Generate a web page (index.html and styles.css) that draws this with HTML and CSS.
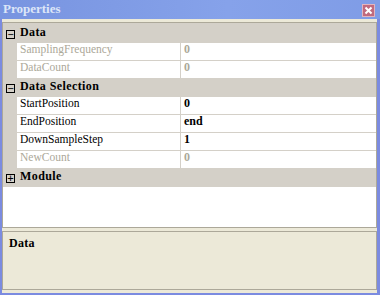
FILE: index.html
```html
<!DOCTYPE html>
<html lang="en">
<head>
    <meta charset="UTF-8">
    <title>Properties</title>
    <link rel="stylesheet" href="styles.css">
</head>
<body>
    <div class="window">
        <div class="titlebar">
            <span class="title">Properties</span>
            <span class="close">
                <svg width="13" height="13" viewBox="0 0 13 13">
                    <rect x="0.5" y="0.5" width="12" height="12" fill="#c06a7e" stroke="#e2b4be"/>
                    <path d="M3.5 3.5 L9.5 9.5 M9.5 3.5 L3.5 9.5" stroke="#fff" stroke-width="2"/>
                </svg>
            </span>
        </div>
        <div class="client">
            <div class="grid">
                <div class="cat first">
                    <span class="toggle">&minus;</span>
                    <span class="cat-name">Data</span>
                </div>
                <div class="prop disabled">
                    <span class="gutter"></span>
                    <span class="name">SamplingFrequency</span>
                    <span class="value">0</span>
                </div>
                <div class="prop disabled">
                    <span class="gutter"></span>
                    <span class="name">DataCount</span>
                    <span class="value">0</span>
                </div>
                <div class="cat">
                    <span class="toggle">&minus;</span>
                    <span class="cat-name">Data Selection</span>
                </div>
                <div class="prop">
                    <span class="gutter"></span>
                    <span class="name">StartPosition</span>
                    <span class="value">0</span>
                </div>
                <div class="prop">
                    <span class="gutter"></span>
                    <span class="name">EndPosition</span>
                    <span class="value">end</span>
                </div>
                <div class="prop">
                    <span class="gutter"></span>
                    <span class="name">DownSampleStep</span>
                    <span class="value">1</span>
                </div>
                <div class="prop disabled">
                    <span class="gutter"></span>
                    <span class="name">NewCount</span>
                    <span class="value">0</span>
                </div>
                <div class="cat">
                    <span class="toggle">+</span>
                    <span class="cat-name">Module</span>
                </div>
            </div>
            <div class="desc">
                <span class="desc-title">Data</span>
            </div>
        </div>
    </div>
</body>
</html>
```

FILE: styles.css
```css
body {
    margin: 0;
    font-family: "Liberation Serif", serif;
}
.window {
    width: 380px;
    height: 295px;
    background-color: #7b8be0;
    display: flex;
    flex-direction: column;
}
.titlebar {
    height: 19px;
    flex: none;
    display: flex;
    align-items: center;
    justify-content: space-between;
    padding: 0 5px 0 3px;
    background: linear-gradient(to right, #7894e0, #86a2ea 60%, #7f9ce6);
}
.title {
    color: #dde6f8;
    font-weight: bold;
    font-size: 13px;
    margin-top: -1px;
}
.close {
    display: flex;
    margin-top: 1px;
}
.client {
    flex: 1;
    margin: 0 3px 2px 2px;
    background-color: #ece9d8;
    padding: 3px 0;
    display: flex;
    flex-direction: column;
    gap: 3px;
}
.grid {
    height: 204px;
    border: 1px solid #aca899;
    background-color: #fff;
    flex: none;
}
.cat {
    height: 18px;
    background-color: #d4d0c8;
    display: flex;
    align-items: center;
    font-weight: bold;
    font-size: 12px;
    letter-spacing: 0.4px;
}
.cat.first {
    height: 20px;
    padding-top: 2px;
    box-sizing: border-box;
}
.toggle {
    width: 7px;
    height: 7px;
    border: 1px solid #000;
    background-color: #d4d0c8;
    margin: 0 5px 0 3px;
    font-size: 10px;
    line-height: 7px;
    text-align: center;
    letter-spacing: 0;
    font-family: "DejaVu Sans Mono", monospace;
    font-weight: normal;
}
.cat-name {
    margin-top: -3px;
}
.prop {
    height: 18px;
    display: flex;
    font-size: 11.5px;
}
.gutter {
    width: 14px;
    background-color: #d4d0c8;
    flex: none;
}
.name {
    width: 160px;
    flex: none;
    padding-left: 3px;
    border-right: 1px solid #d4d0c8;
    border-bottom: 1px solid #d4d0c8;
    line-height: 13px;
}
.value {
    flex: 1;
    padding-left: 3px;
    border-bottom: 1px solid #d4d0c8;
    font-weight: bold;
    font-size: 12px;
    line-height: 13px;
}
.disabled {
    color: #aca899;
}
.desc {
    flex: 1;
    border: 1px solid #aca899;
    padding: 1px 6px;
}
.desc-title {
    font-weight: bold;
    font-size: 12px;
    letter-spacing: 0.3px;
}
```
